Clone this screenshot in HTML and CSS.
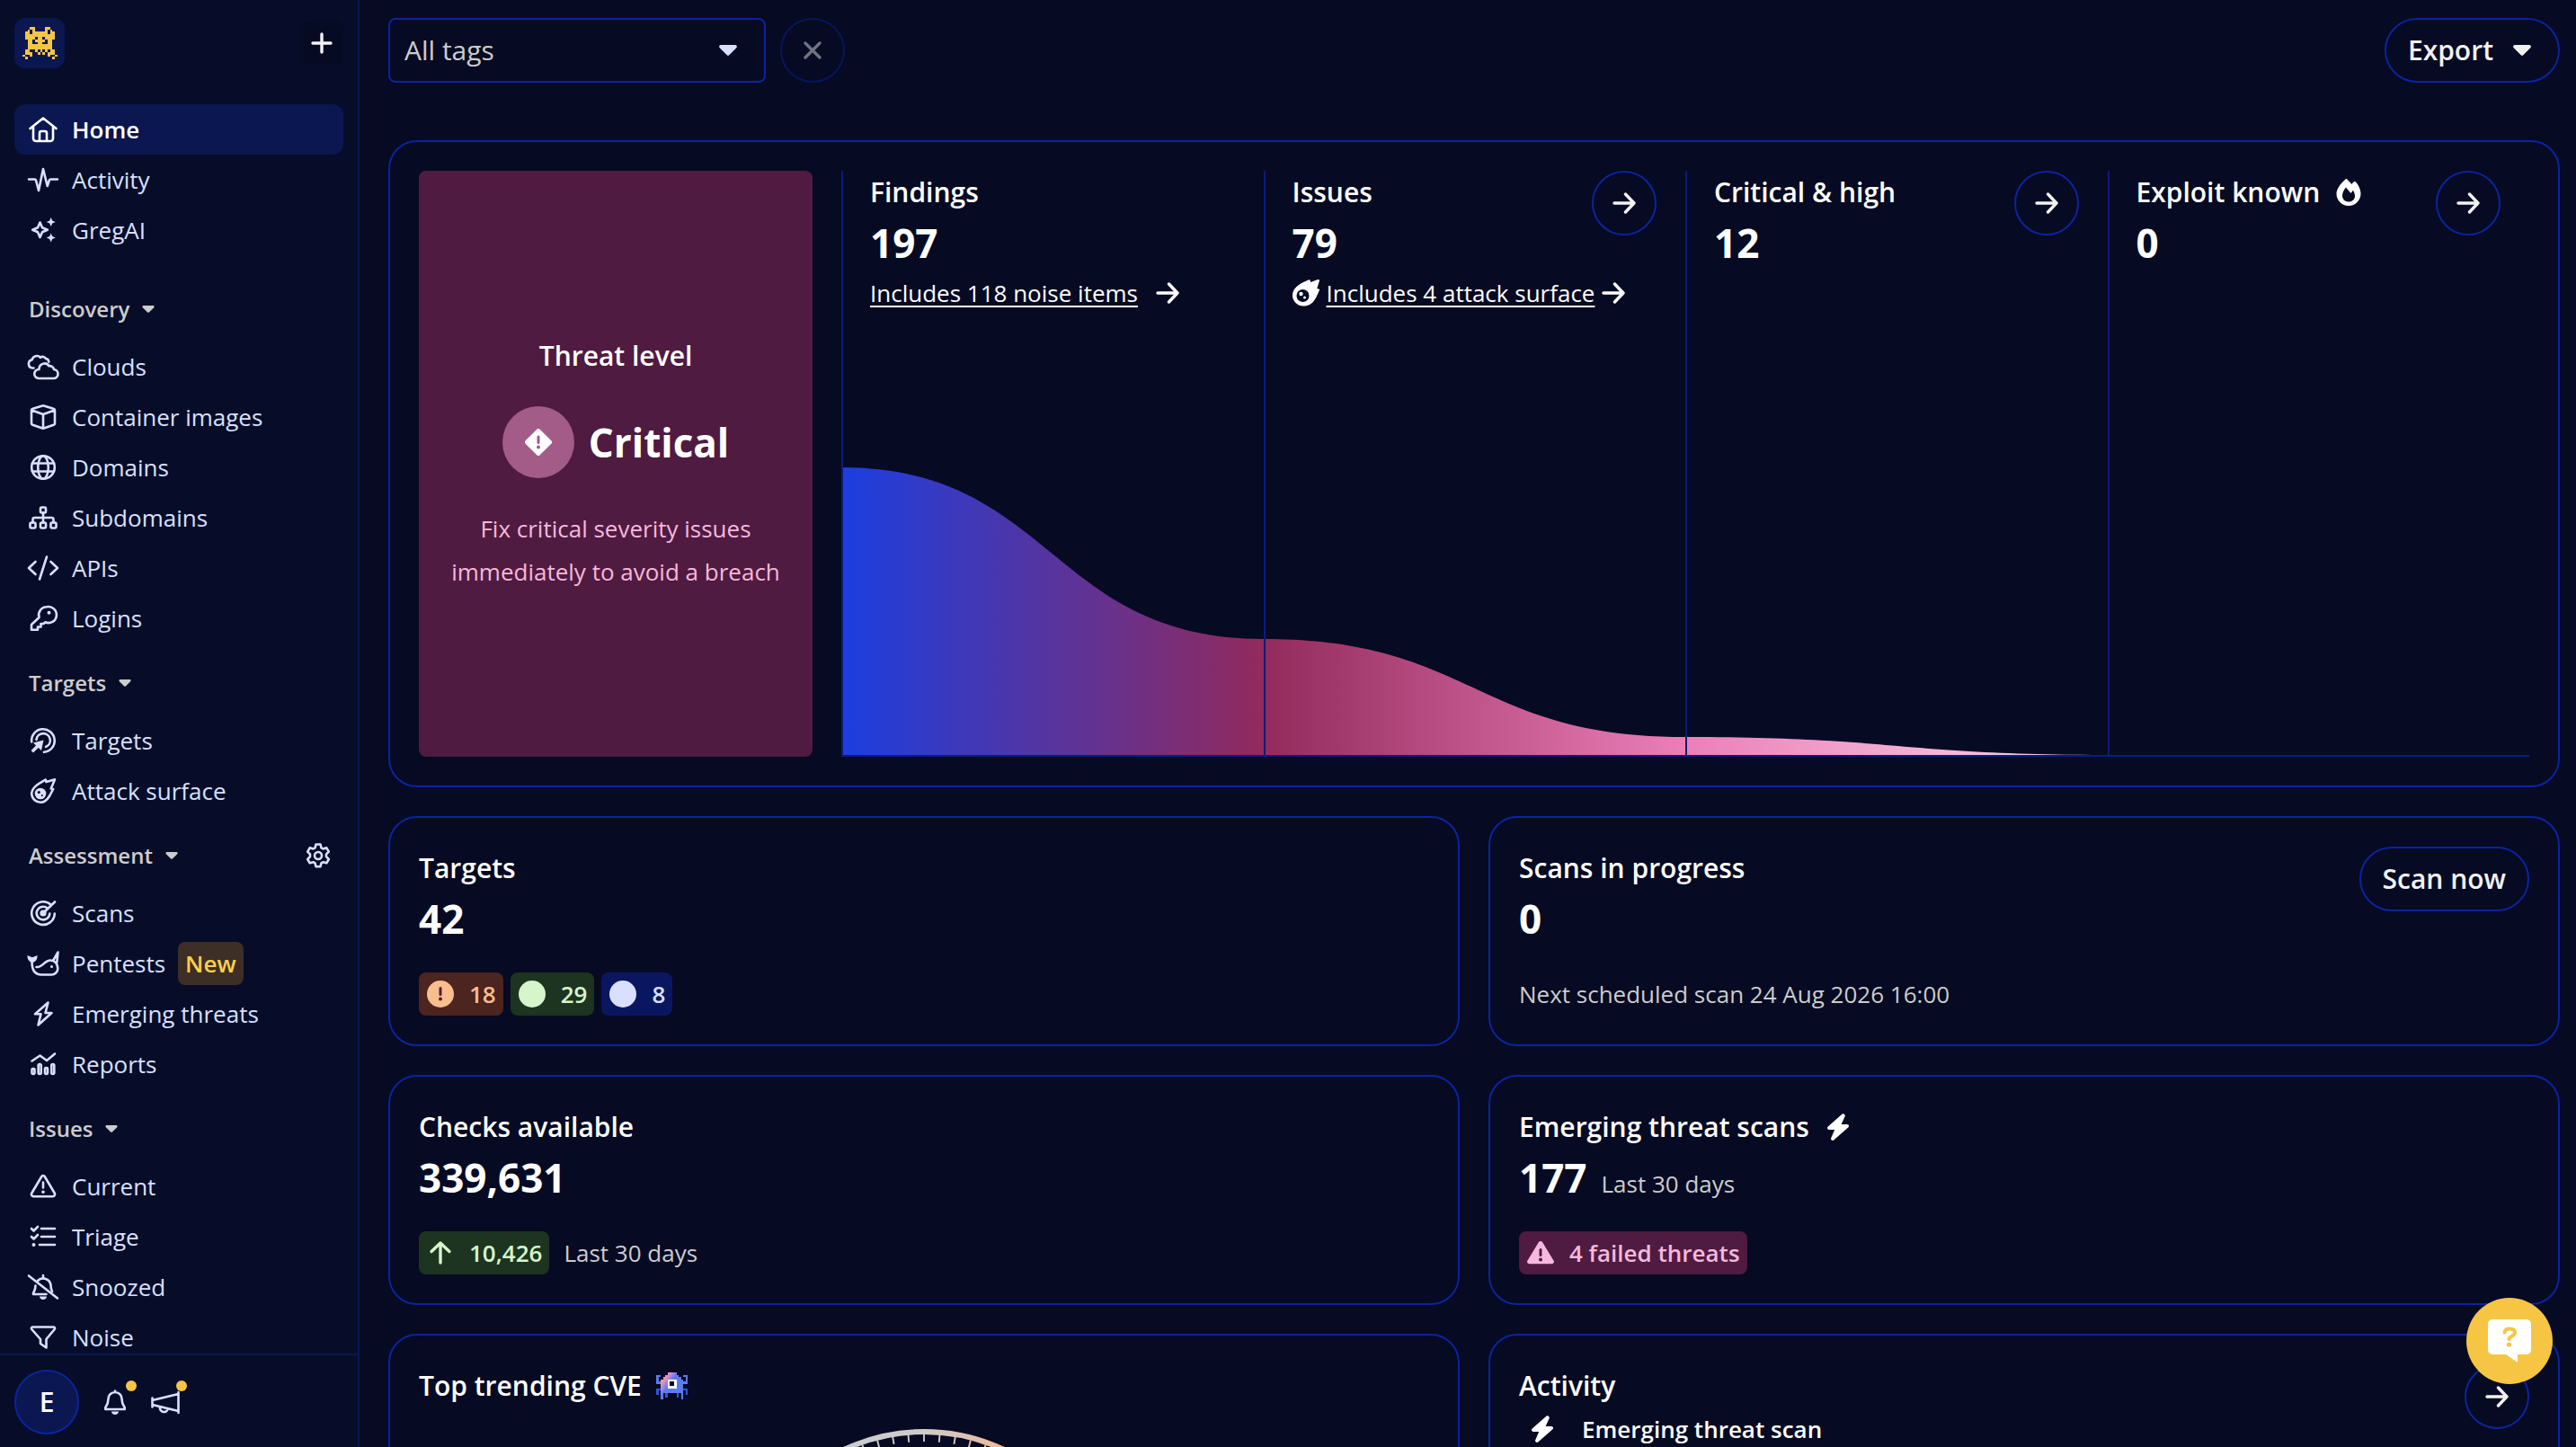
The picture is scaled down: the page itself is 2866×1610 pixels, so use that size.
FILE: index.html
```
<!DOCTYPE html>
<html lang="en">
<head>
  <meta charset="UTF-8">
  <meta name="viewport" content="width=device-width, initial-scale=1.0">
  <title>Home</title>
  <link rel="stylesheet" href="styles.css">
</head>
<body>
  <!-- shared icons -->
  <svg class="sprite" aria-hidden="true">
    <symbol id="caret" viewBox="0 0 20 12"><path fill="currentColor" d="M2 0h16c1.700 0 2.500 2 1.300 3.200l-8 8a1.900 1.900 0 0 1-2.600 0l-8-8C-.5 2 .3 0 2 0z"/></symbol>
    <symbol id="arrow" viewBox="0 0 26 24"><path fill="none" stroke="currentColor" stroke-width="3.4" stroke-linecap="round" stroke-linejoin="round" d="M2 12h22M14.500 2l9.500 10-9.500 10"/></symbol>
    <symbol id="bolt" viewBox="0 0 24 30"><path fill="currentColor" d="M18.500.4c1.300.7 1.600 2 1 3.200L15.600 12H22c2 0 2.700 2.300 1.200 3.500L7.500 29.300c-1.700 1.500-4.200 0-3.200-2.300L8.200 18H2c-2 0-2.700-2.300-1.200-3.500L16.300.7c.7-.5 1.500-.6 2.200-.3z"/></symbol>
  </svg>

  <div class="app">
    <aside class="sidebar">
      <div class="sidebar-top">
        <a class="logo" href="#" aria-label="Home page">
          <svg viewBox="0 0 14 13" width="39" height="38" fill="none" stroke="#f6c544" shape-rendering="crispEdges">
            <path d="M3 .5h2M9 .5h2M2 1.500h1M4 1.500h1M9 1.500h1M11 1.500h1M1 2.500h2M4 2.500h6M11 2.500h2M1 3.500h12M1 4.500h4M6 4.500h2M9 4.500h4M2 5.500h2M5 5.500h4M10 5.500h2M2 6.500h2M6 6.500h2M10 6.500h2M2 7.500h10M2 8.500h10M1 9.500h2M5 9.500h1M7 9.500h1M9 9.500h1M11 9.500h2M1 10.500h3M6 10.500h1M8 10.500h1M10 10.500h3M0 11.500h1M3 11.500h1M10 11.500h1M13 11.500h1M1 12.500h1M12 12.500h1"/>
          </svg>
        </a>
        <button class="add" type="button" aria-label="Add">
          <svg viewBox="0 0 24 24" width="24" height="24" fill="none" stroke="currentColor" stroke-width="3.4" stroke-linecap="round"><path d="M12 2v20M2 12h20"/></svg>
        </button>
      </div>

      <nav class="nav">
        <ul class="nav-list">
          <li><a class="nav-item active" href="#">
            <svg class="icon" viewBox="0 0 36 28"><path d="M3.500 13 18 1.500 32.500 13M7 10.500V24a3 3 0 0 0 3 3h16a3 3 0 0 0 3-3V10.500M14 27v-9a2 2 0 0 1 2-2h4a2 2 0 0 1 2 2v9"/></svg>
            Home</a></li>
          <li><a class="nav-item" href="#">
            <svg class="icon" viewBox="0 0 36 28"><path d="M2 13.500h6.500c.8 0 1.300.5 1.500 1.200L13 26 18 2l4.700 19 2-6c.3-1 .9-1.500 1.800-1.500H34"/></svg>
            Activity</a></li>
          <li><a class="nav-item" href="#">
            <svg class="icon" viewBox="0 0 36 28"><path d="M14.500 5.500 17 11.300l5.800 2.500-5.800 2.500-2.500 5.800-2.500-5.800-5.800-2.500 5.800-2.500z"/><path class="solid" d="M26.700 0l1.500 3.500 3.500 1.500-3.500 1.500-1.500 3.500-1.500-3.500L21.700 5l3.500-1.500zM26.700 17.500l1.500 3.500 3.500 1.500-3.500 1.500-1.500 3.500-1.500-3.500-3.500-1.500 3.500-1.500z"/></svg>
            GregAI</a></li>
        </ul>

        <div class="nav-head first"><button type="button">Discovery <svg class="small-caret"><use href="#caret"/></svg></button></div>
        <ul class="nav-list">
          <li><a class="nav-item" href="#">
            <svg class="icon" viewBox="0 0 36 28"><path d="M13 27h16a5 5 0 0 0 1-10 5 5 0 0 0-5.500-3.800A6 6 0 0 0 13.500 16v1A5 5 0 0 0 13 27zM7.500 15.500H6.300A4.700 4.700 0 0 1 5.700 6.200 5.400 5.400 0 0 1 15 3.800 4 4 0 0 1 21 5a4 4 0 0 1 3.300 3.700"/></svg>
            Clouds</a></li>
          <li><a class="nav-item" href="#">
            <svg class="icon" viewBox="0 0 36 28"><path d="M17.200 1.400 6.500 4.700A2 2 0 0 0 5 6.600v14.300a2 2 0 0 0 1.400 1.900l10.800 3.800a2.400 2.400 0 0 0 1.600 0l10.800-3.800a2 2 0 0 0 1.400-1.900V6.600a2 2 0 0 0-1.500-1.900L18.800 1.400a2.400 2.400 0 0 0-1.600 0zM5.500 6.500 18 11l12.500-4.500M18 11v15.500"/></svg>
            Container images</a></li>
          <li><a class="nav-item" href="#">
            <svg class="icon" viewBox="0 0 36 28"><circle cx="18" cy="14" r="12.800"/><ellipse cx="18" cy="14" rx="5.800" ry="12.800"/><path d="M6 9.500h24M6 18.500h24"/></svg>
            Domains</a></li>
          <li><a class="nav-item" href="#">
            <svg class="icon" viewBox="0 0 36 28"><rect x="15" y="2.500" width="6" height="6" rx="1.500"/><rect x="3.500" y="19.500" width="6" height="6" rx="1.500"/><rect x="15" y="19.500" width="6" height="6" rx="1.500"/><rect x="26.500" y="19.500" width="6" height="6" rx="1.500"/><path d="M18 8.500v11M6.500 19.500v-3.500a2 2 0 0 1 2-2h19a2 2 0 0 1 2 2v3.500"/></svg>
            Subdomains</a></li>
          <li><a class="nav-item" href="#">
            <svg class="icon" viewBox="0 0 36 28"><path d="M9.500 7 2 14l7.500 7M26.500 7l7.500 7-7.500 7M22 1.500 14 26.500"/></svg>
            APIs</a></li>
          <li><a class="nav-item" href="#">
            <svg class="icon" viewBox="0 0 36 28"><path d="M22 1.300a9 9 0 0 0-8.500 11.700L5 21v5.800h7V23.500h3.500V20h3l1.700-1.700A9 9 0 1 0 22 1.300z"/><circle class="solid" cx="24.500" cy="7.700" r="2"/></svg>
            Logins</a></li>
        </ul>

        <div class="nav-head"><button type="button">Targets <svg class="small-caret"><use href="#caret"/></svg></button></div>
        <ul class="nav-list">
          <li><a class="nav-item" href="#">
            <svg class="icon" viewBox="0 0 36 28"><path d="M5.200 15.500A12.800 12.800 0 1 1 19 26.800M10.500 13A7.700 7.700 0 1 1 21 21"/><path class="solid" d="M18.500 13.500 16 25l-3.300-3L7 27.500 4.500 25l5.500-5.500L7 16.500z"/></svg>
            Targets</a></li>
          <li><a class="nav-item" href="#">
            <svg class="icon" viewBox="0 0 36 28"><path d="M31 1.200 21.500 4l-.8-2.500C13 6 5.200 10 5.200 17.300a10 10 0 0 0 10 9.500c5 0 8-4 10-7.300l4-7.500-2.500-.5z"/><circle class="solid" cx="15" cy="17" r="6.300"/><circle class="hole" cx="13.300" cy="15.500" r="1.600"/><circle class="hole" cx="16.800" cy="19" r="1"/></svg>
            Attack surface</a></li>
        </ul>

        <div class="nav-head">
          <button type="button">Assessment <svg class="small-caret"><use href="#caret"/></svg></button>
          <a class="gear" href="#" aria-label="Assessment settings">
            <svg viewBox="0 0 28 28" width="28" height="28" fill="none" stroke="currentColor" stroke-width="2.6" stroke-linejoin="round"><path d="M11.500 1.500h5l1 3.800 2 1.100 3.800-1.100 2.500 4.300-2.800 2.800v2.800l2.800 2.800-2.500 4.300-3.800-1.100-2 1.200-1 3.800h-5l-1-3.800-2-1.200-3.800 1.100-2.500-4.300L5 15.200v-2.800L2.200 9.600l2.500-4.300 3.800 1.100 2-1.100z"/><circle cx="14" cy="14" r="4"/></svg>
          </a>
        </div>
        <ul class="nav-list">
          <li><a class="nav-item" href="#">
            <svg class="icon" viewBox="0 0 36 28"><path d="M26.500 4.500A12.800 12.800 0 1 0 30.800 14.500M22.500 8.300A7.300 7.300 0 1 0 25.300 14.500M18 14 31 1.500"/><circle class="solid" cx="18" cy="14" r="3.600"/></svg>
            Scans</a></li>
          <li><a class="nav-item" href="#">
            <svg class="icon" viewBox="0 0 36 28"><path d="M5.500 12c0 8 2.500 14.500 10.500 14.500h11a7 7 0 0 0 7.300-7C34.300 14 30.500 10.500 26 10.500c-6.500 0-9 8.500-15.500 7.500M29 11l5.500-9.500-1.300 11.500"/><path class="solid" d="M.5 5 6 7.200 11.500 5c.3 4-1.800 7.500-5.500 8C2.300 12.500.2 9 .5 5z"/><circle class="solid" cx="27.500" cy="17.500" r="1.500"/></svg>
            Pentests <span class="badge">New</span></a></li>
          <li><a class="nav-item" href="#">
            <svg class="icon" viewBox="0 0 36 28"><path d="M23.500 1.500 9 14.300h6.500L12.500 26.500 27.500 13H20.500z"/></svg>
            Emerging threats</a></li>
          <li><a class="nav-item" href="#">
            <svg class="icon" viewBox="0 0 36 28"><path d="M5.500 10.500 14.500 4.500l7.500 5.500L31 2.500"/><rect x="5.500" y="19" width="3" height="6" rx="1.500"/><rect x="12.700" y="14" width="3" height="11" rx="1.500"/><rect x="20" y="18" width="3" height="7" rx="1.500"/><rect x="27.300" y="14" width="3" height="11" rx="1.500"/></svg>
            Reports</a></li>
        </ul>

        <div class="nav-head"><button type="button">Issues <svg class="small-caret"><use href="#caret"/></svg></button></div>
        <ul class="nav-list">
          <li><a class="nav-item" href="#">
            <svg class="icon" viewBox="0 0 36 28"><path d="M16.300 3 5.300 21.500a2.400 2.400 0 0 0 2 3.700h21.400a2.400 2.400 0 0 0 2-3.700L19.700 3a2 2 0 0 0-3.400 0zM18 9.500v6"/><circle class="solid" cx="18" cy="20.300" r="1.800"/></svg>
            Current</a></li>
          <li><a class="nav-item" href="#">
            <svg class="icon" viewBox="0 0 36 28"><path d="M16 5h15M16 14h15M14 23h17M5 5l2.500 2.500L12 3M5 14l2.500 2.500L12 12"/><circle class="solid" cx="7.500" cy="23" r="2"/></svg>
            Triage</a></li>
          <li><a class="nav-item" href="#">
            <svg class="icon" viewBox="0 0 36 28"><path d="M2 1.500 34 26.500M9.500 12.500c0 4-1 6-2.500 8.500v1h14.500M12 7a8.500 8.500 0 0 1 14.500 5c0 2.500.5 5 1.500 7M18 1v2"/><path class="solid" d="M14 24.500h8c0 2-1.800 3.500-4 3.500s-4-1.500-4-3.500z"/></svg>
            Snoozed</a></li>
          <li><a class="nav-item" href="#">
            <svg class="icon" viewBox="0 0 36 28"><path d="M6.500 2.500h23c1.500 0 2 1.500 1.200 2.500L21.500 16v9.500L15 21v-5L5.300 5c-.8-1-.3-2.500 1.200-2.500z"/></svg>
            Noise</a></li>
        </ul>
      </nav>

      <div class="sidebar-bottom">
        <button class="avatar" type="button">E</button>
        <a class="notify bell" href="#" aria-label="Notifications">
          <svg viewBox="0 0 24 28" width="24" height="28" fill="none" stroke="currentColor" stroke-width="2.6" stroke-linejoin="round"><path d="M12 3a7.500 7.500 0 0 0-7.500 7.500c0 5-1.500 7-3.200 9.500v2h21.400v-2c-1.700-2.500-3.200-4.500-3.200-9.500A7.500 7.500 0 0 0 12 3zM12 .5V3"/><path fill="currentColor" stroke="none" d="M8 24.500h8c0 2-1.800 3.500-4 3.500s-4-1.500-4-3.500z"/></svg>
        </a>
        <a class="notify horn" href="#" aria-label="Announcements">
          <svg viewBox="0 0 32 28" width="32" height="28" fill="none" stroke="currentColor" stroke-width="2.6" stroke-linejoin="round" stroke-linecap="round"><path d="M30.500 3v23M30.500 5 1.500 12v5l29 7M1.500 9.500v10M10 19.500a4.500 4.500 0 1 0 8.800 2"/></svg>
        </a>
      </div>
    </aside>

    <main class="main">
      <div class="toolbar">
        <div class="select-wrap">
          <select aria-label="Tags"><option>All tags</option></select>
          <svg class="caret"><use href="#caret"/></svg>
        </div>
        <button class="round" type="button" aria-label="Clear tags" disabled>
          <svg viewBox="0 0 20 20" width="20" height="20" fill="none" stroke="currentColor" stroke-width="3.4" stroke-linecap="round"><path d="M2 2l16 16M18 2 2 18"/></svg>
        </button>
        <button class="pill-btn export" type="button">Export <svg class="caret"><use href="#caret"/></svg></button>
      </div>

      <section class="card overview">
        <div class="threat">
          <h2>Threat level</h2>
          <div class="threat-level">
            <span class="threat-icon">
              <svg viewBox="0 0 30 30" width="30" height="30"><path fill="#fff" d="M13.300.7a2.400 2.400 0 0 1 3.400 0l12.600 12.600a2.400 2.400 0 0 1 0 3.400L16.700 29.300a2.400 2.400 0 0 1-3.400 0L.7 16.700a2.400 2.400 0 0 1 0-3.400z"/><path stroke="#a25c87" stroke-width="3" stroke-linecap="round" d="M15 9v6.500"/><circle cx="15" cy="20.500" r="2" fill="#a25c87"/></svg>
            </span>
            <strong>Critical</strong>
          </div>
          <p>Fix critical severity issues immediately to avoid a breach</p>
        </div>

        <div class="funnel">
          <svg class="funnel-chart" viewBox="0 0 1878 320" preserveAspectRatio="none" aria-hidden="true">
            <defs>
              <linearGradient id="funnel-fill" gradientUnits="userSpaceOnUse" x1="0" y1="0" x2="1408" y2="0">
                <stop offset="0" stop-color="#1c3ee0"/>
                <stop offset=".333" stop-color="#922a5c"/>
                <stop offset=".667" stop-color="#ec7fb8"/>
                <stop offset="1" stop-color="#f8d9ea"/>
              </linearGradient>
            </defs>
            <path fill="url(#funnel-fill)" d="M0 0C234 0 234 191 469 191S704 300 939 300S1174 320 1408 320H0z"/>
          </svg>
          <div class="stage">
            <div class="stage-text">
              <h2>Findings</h2>
              <div class="number">197</div>
              <a class="more wide" href="#"><span>Includes 118 noise items</span><svg class="arrow"><use href="#arrow"/></svg></a>
            </div>
          </div>
          <div class="stage">
            <div class="stage-text">
              <h2>Issues</h2>
              <div class="number">79</div>
              <a class="more" href="#">
                <svg viewBox="0 0 30 30" width="30" height="30"><path fill="currentColor" fill-rule="evenodd" d="M29.500.3c.5.5.5 1 .3 1.600l-2.500 8 2 .5c.7.2.9.8.6 1.500C27 18 24 29.500 12 29.500A12 12 0 0 1 0 17.500C0 9 9 4 18.300.3c.7-.3 1.300 0 1.400.7l.5 2L28 .1c.6-.2 1.200-.2 1.500.2zM11.500 11a7 7 0 1 0 0 14 7 7 0 0 0 0-14z"/><circle cx="9.500" cy="16" r="2.200" fill="currentColor"/><circle cx="13.500" cy="20" r="1.500" fill="currentColor"/></svg>
                <span>Includes 4 attack surface</span><svg class="arrow"><use href="#arrow"/></svg></a>
            </div>
            <a class="round" href="#" aria-label="View issues"><svg class="arrow"><use href="#arrow"/></svg></a>
          </div>
          <div class="stage">
            <div class="stage-text">
              <h2>Critical &amp; high</h2>
              <div class="number">12</div>
            </div>
            <a class="round" href="#" aria-label="View critical and high"><svg class="arrow"><use href="#arrow"/></svg></a>
          </div>
          <div class="stage">
            <div class="stage-text">
              <h2>Exploit known
                <svg viewBox="0 0 32 30" width="32" height="30"><path fill="currentColor" fill-rule="evenodd" d="M12.500.5a1.300 1.300 0 0 1 1.900 0c1.800 1.700 3.500 3.500 5 5.500.7-.9 1.500-1.900 2.400-2.700a1.300 1.300 0 0 1 1.900 0C27 6.600 29.500 12 29.500 16.500 29.500 24 23.500 30 16 30S2.500 24 2.500 16.500C2.500 12 6.500 5.500 12.500.5zM16 25.500c4 0 7-2.600 7-6.500 0-2-1-4.500-2-6.200L18.500 16 13 9.500C11 12 9 15.500 9 18.500c0 4.200 3 7 7 7z"/></svg>
              </h2>
              <div class="number">0</div>
            </div>
            <a class="round" href="#" aria-label="View exploit known"><svg class="arrow"><use href="#arrow"/></svg></a>
          </div>
        </div>
      </section>

      <div class="cards">
        <section class="card">
          <div>
            <h2>Targets</h2>
            <div class="number">42</div>
            <div class="row tags">
              <span class="tag orange"><svg viewBox="0 0 30 30" width="32" height="30"><circle cx="15" cy="15" r="15" fill="currentColor"/><path stroke="#4c2420" stroke-width="3" stroke-linecap="round" d="M15 8.500v7"/><circle cx="15" cy="20.500" r="2" fill="#4c2420"/></svg>18</span>
              <span class="tag green"><svg viewBox="0 0 30 30" width="32" height="30"><circle cx="15" cy="15" r="15" fill="currentColor"/></svg>29</span>
              <span class="tag blue"><svg viewBox="0 0 30 30" width="32" height="30"><circle cx="15" cy="15" r="15" fill="currentColor"/></svg>8</span>
            </div>
          </div>
        </section>

        <section class="card">
          <div>
            <h2>Scans in progress</h2>
            <div class="number">0</div>
            <div class="row muted">Next scheduled scan 24 Aug 2026 16:00</div>
          </div>
          <button class="pill-btn" type="button">Scan now</button>
        </section>

        <section class="card">
          <div>
            <h2>Checks available</h2>
            <div class="number">339,631</div>
            <div class="row">
              <span class="tag green"><svg viewBox="0 0 30 30" width="32" height="30" fill="none" stroke="currentColor" stroke-width="3.4" stroke-linecap="round" stroke-linejoin="round"><path d="M15 4v22M5 13.500 15 4l10 9.500"/></svg>10,426</span>
              <span class="muted">Last 30 days</span>
            </div>
          </div>
        </section>

        <section class="card">
          <div>
            <h2>Emerging threat scans <svg class="bolt"><use href="#bolt"/></svg></h2>
            <div class="number">177 <span class="muted">Last 30 days</span></div>
            <div class="row">
              <span class="tag pink"><svg viewBox="0 0 30 30" width="32" height="30"><path fill="currentColor" d="M12.800 3.300a2.600 2.600 0 0 1 4.400 0l12.400 20.400a2.300 2.300 0 0 1-2 3.500H2.400a2.300 2.300 0 0 1-2-3.500z"/><path stroke="#4f1b40" stroke-width="3" stroke-linecap="round" d="M15 11.500v6"/><circle cx="15" cy="22.500" r="2" fill="#4f1b40"/></svg>4 failed threats</span>
            </div>
          </div>
        </section>

        <section class="card trending">
          <h2>Top trending CVE
            <svg viewBox="0 0 14 12" width="35" height="30" fill="none" shape-rendering="crispEdges">
              <defs>
                <linearGradient id="bug-fill" gradientUnits="userSpaceOnUse" x1="3" y1="2" x2="6.500" y2="4.500">
                  <stop offset="0" stop-color="#f0b070"/><stop offset=".4" stop-color="#d98ad8"/><stop offset="1" stop-color="#5b7bf0"/>
                </linearGradient>
              </defs>
              <path stroke="url(#bug-fill)" d="M5 .5h4M4 1.500h6M3 2.500h8M2 3.500h10M2 4.500h10M2 5.500h10M2 6.500h10M2 7.500h10M2 8.500h10M2 9.500h1M11 9.500h1M2 10.500h1M11 10.500h1M2 11.500h1M11 11.500h1"/>
              <path stroke="#5b7bf0" d="M0 1.500h2M12 1.500h2M0 2.500h1M13 2.500h1M0 3.500h1M13 3.500h1M0 4.500h2M12 4.500h2"/>
              <path stroke="#2f55e0" d="M0 7.500h2M12 7.500h2M0 8.500h1M13 8.500h1M0 9.500h1M4 9.500h1M9 9.500h1M13 9.500h1M4 10.500h1M9 10.500h1"/>
              <path stroke="#fff" d="M5 3.500h4M5 4.500h4M5 5.500h4M5 6.500h4"/>
              <path stroke="#060a23" d="M6 4.500h2M6 5.500h2"/>
            </svg>
          </h2>
          <svg class="gauge" viewBox="0 0 424 230" width="424" height="230" fill="none">
            <defs>
              <linearGradient id="gauge-ring"><stop offset=".5" stop-color="#ccc"/><stop offset=".75" stop-color="#f6b78a"/><stop offset="1" stop-color="#f77d32"/></linearGradient>
            </defs>
            <circle cx="212" cy="212" r="209" stroke="url(#gauge-ring)" stroke-width="6"/>
            <circle cx="212" cy="212" r="202" stroke="url(#gauge-ring)" stroke-width="8" pathLength="148" stroke-dasharray=".22 1.780" stroke-dashoffset="1.110"/>
          </svg>
        </section>

        <section class="card">
          <div>
            <h2>Activity</h2>
            <ul class="activity">
              <li><svg class="bolt"><use href="#bolt"/></svg>Emerging threat scan</li>
            </ul>
          </div>
          <a class="round" href="#" aria-label="View activity"><svg class="arrow"><use href="#arrow"/></svg></a>
        </section>
      </div>
    </main>
  </div>

  <button class="help" type="button" aria-label="Help">
    <svg viewBox="0 0 48 48" width="48" height="48"><path fill="#fff" d="M5 0h38a5 5 0 0 1 5 5v29a5 5 0 0 1-5 5H33v9L20 39H5a5 5 0 0 1-5-5V5a5 5 0 0 1 5-5z"/><path fill="none" stroke="#f6c544" stroke-width="4" stroke-linecap="round" d="M18.500 14.500c.5-3 2.500-4 5.500-4 3.500 0 6 1.500 6 4.300 0 4-6.500 3.700-6.500 7.200"/><circle cx="23.500" cy="28" r="2.600" fill="#f6c544"/></svg>
  </button>
</body>
</html>
```

FILE: styles.css
```
* {
  box-sizing: border-box;
}
body {
  margin: 0;
  background-color: #060a23;
  color: #fff;
  font-family: "Open Sans", "Noto Sans", sans-serif;
  font-size: 26px;
  line-height: 48px;
}
h2, p, ul {
  margin: 0;
  padding: 0;
}
ul {
  list-style: none;
}
a {
  color: inherit;
  text-decoration: none;
}
button, select {
  font: inherit;
  color: inherit;
  background: none;
  border: 0;
  padding: 0;
}
svg {
  flex-shrink: 0;
}
.sprite {
  display: none;
}
.app {
  display: flex;
  height: 100vh;
}

/* sidebar */
.sidebar {
  display: flex;
  flex-direction: column;
  flex-shrink: 0;
  width: 400px;
  background-color: #070d29;
  border-right: 2px solid #0a1750;
}
.sidebar-top {
  display: flex;
  align-items: center;
  justify-content: space-between;
  padding: 20px 16px;
}
.logo {
  display: flex;
  align-items: center;
  justify-content: center;
  width: 56px;
  height: 56px;
  border-radius: 12px;
  background-color: #0a1750;
}
.add {
  display: flex;
  align-items: center;
  justify-content: center;
  width: 48px;
  height: 48px;
  border-radius: 8px;
  background-color: #060a23;
  color: #f2f2f2;
}
.nav {
  flex: 1;
  overflow-y: auto;
  scrollbar-width: none;
  padding: 20px 16px 0;
}
.nav-item {
  display: flex;
  align-items: center;
  gap: 14px;
  height: 56px;
  padding: 0 14px;
  border-radius: 12px;
  color: #d9e0ff;
}
.nav-item.active {
  background-color: #0a1750;
  color: #fff;
  font-weight: 600;
}
.icon {
  width: 36px;
  height: 28px;
  fill: none;
  stroke: currentColor;
  stroke-width: 2.6;
  stroke-linecap: round;
  stroke-linejoin: round;
  overflow: visible;
}
.icon .solid {
  fill: currentColor;
  stroke: none;
}
.icon .hole {
  fill: #070d29;
  stroke: none;
}
.nav-head {
  display: flex;
  align-items: center;
  justify-content: space-between;
  height: 72px;
  margin-top: 8px;
  padding: 0 14px 0 16px;
  color: #ccc;
  font-size: 24px;
  font-weight: 600;
}
.nav-head.first {
  margin-top: 24px;
}
.nav-head button {
  display: flex;
  align-items: center;
  gap: 14px;
}
.small-caret {
  width: 14px;
  height: 8px;
}
.gear {
  display: flex;
  color: #d9e0ff;
}
.badge {
  padding: 0 8px;
  border-radius: 8px;
  background-color: #3d2e26;
  color: #fbd04f;
  font-weight: 600;
}
.sidebar-bottom {
  display: flex;
  align-items: center;
  height: 104px;
  padding: 2px 16px 0;
  border-top: 2px solid #0a1750;
}
.avatar {
  width: 72px;
  height: 72px;
  border: 2px solid #0a24a0;
  border-radius: 50%;
  background-color: #0a1750;
  font-size: 30px;
  font-weight: 600;
}
.notify {
  position: relative;
  display: flex;
  margin-left: 28px;
  color: #d9e0ff;
}
.notify::after {
  content: '';
  position: absolute;
  top: -10px;
  right: -12px;
  width: 12px;
  height: 12px;
  border-radius: 50%;
  background-color: #f6c544;
}
.horn::after {
  right: -8px;
}

/* main */
.main {
  flex: 1;
  min-width: 0;
  overflow-y: auto;
  scrollbar-width: none;
  padding: 20px 18px 32px 32px;
}
.toolbar {
  display: flex;
  gap: 16px;
  margin-bottom: 64px;
}
.select-wrap {
  display: grid;
  align-items: center;
  width: 420px;
}
.select-wrap > * {
  grid-area: 1 / 1;
}
.select-wrap select {
  appearance: none;
  width: 100%;
  height: 72px;
  padding: 0 16px;
  border: 2px solid #0a24a0;
  border-radius: 8px;
  color: #ccc;
  font-size: 30px;
}
.select-wrap .caret {
  justify-self: end;
  margin-right: 32px;
  color: #d9e0ff;
  pointer-events: none;
}
.caret {
  width: 20px;
  height: 12px;
}
.arrow {
  width: 26px;
  height: 24px;
}
.bolt {
  width: 32px;
  height: 30px;
}
.round, .pill-btn {
  display: flex;
  align-items: center;
  justify-content: center;
  flex-shrink: 0;
  height: 72px;
  border: 2px solid #0a24a0;
  border-radius: 36px;
  color: #f2f2f2;
}
.round {
  width: 72px;
}
.round:disabled {
  opacity: 0.45;
}
.pill-btn {
  gap: 22px;
  padding: 0 24px;
  font-size: 30px;
  font-weight: 600;
}
.export {
  margin-left: auto;
  padding-right: 30px;
}
.card {
  display: flex;
  justify-content: space-between;
  padding: 32px;
  border: 2px solid #0a24a0;
  border-radius: 32px;
}
h2 {
  display: flex;
  align-items: center;
  gap: 16px;
  font-size: 30px;
  font-weight: 600;
  line-height: 48px;
}
.number {
  display: flex;
  align-items: baseline;
  gap: 16px;
  font-size: 44px;
  font-weight: 700;
  line-height: 64px;
}
.muted {
  color: #ccc;
  font-size: 26px;
  font-weight: 400;
  line-height: 48px;
}
.row {
  display: flex;
  gap: 16px;
  margin-top: 28px;
}
.tags {
  gap: 8px;
}
.tag {
  display: flex;
  align-items: center;
  gap: 16px;
  padding: 0 8px;
  border-radius: 8px;
  font-weight: 600;
}
.orange {
  background-color: #4c2420;
  color: #f8be8e;
}
.green {
  background-color: #1c3420;
  color: #d6f5ca;
}
.blue {
  background-color: #0a1760;
  color: #d9e0ff;
}
.pink {
  background-color: #4f1b40;
  color: #f6b8dc;
}

/* overview card */
.overview {
  gap: 32px;
  margin-bottom: 32px;
}
.threat {
  display: flex;
  flex-direction: column;
  align-items: center;
  justify-content: center;
  width: 438px;
  height: 652px;
  padding: 0 32px;
  border-radius: 8px;
  background-color: #4f1b40;
  text-align: center;
}
.threat-level {
  display: flex;
  align-items: center;
  gap: 16px;
  margin: 32px 0;
  font-size: 44px;
}
.threat-icon {
  display: flex;
  align-items: center;
  justify-content: center;
  width: 80px;
  height: 80px;
  border-radius: 50%;
  background-color: #a25c87;
}
.threat p {
  color: #f6b8dc;
}
.funnel {
  flex: 1;
  display: grid;
  grid-template-columns: repeat(4, 1fr);
  border-bottom: 2px solid #0a1d7c;
}
/* the chart lies behind all four stages */
.funnel-chart {
  grid-area: 1 / 1 / 2 / 5;
  align-self: end;
  width: 100%;
  height: 320px;
}
.stage {
  grid-row: 1;
  display: flex;
  align-items: flex-start;
  min-width: 0;
  padding: 0 32px 0 30px;
  border-left: 2px solid #0a1d7c;
}
.stage:nth-of-type(1) {
  grid-column: 1;
}
.stage:nth-of-type(2) {
  grid-column: 2;
}
.stage:nth-of-type(3) {
  grid-column: 3;
}
.stage:nth-of-type(4) {
  grid-column: 4;
}
/* the link may run on below the round button */
.stage-text {
  flex: 1;
  min-width: 0;
  white-space: nowrap;
}
.more {
  display: inline-flex;
  align-items: center;
  gap: 8px;
}
.more.wide {
  gap: 20px;
}
.more span {
  text-decoration: underline;
  text-underline-offset: 4px;
  text-decoration-thickness: 2px;
}

/* cards below */
.cards {
  display: grid;
  grid-template-columns: 1fr 1fr;
  gap: 32px;
}
.trending {
  flex-direction: column;
}
.gauge {
  align-self: center;
  margin-top: 24px;
}
.activity li {
  display: flex;
  align-items: center;
  gap: 28px;
  padding-left: 10px;
  font-weight: 600;
}
.help {
  position: fixed;
  right: 26px;
  bottom: 70px;
  display: flex;
  align-items: center;
  justify-content: center;
  width: 96px;
  height: 96px;
  border-radius: 50%;
  background-color: #f6c544;
}
```
